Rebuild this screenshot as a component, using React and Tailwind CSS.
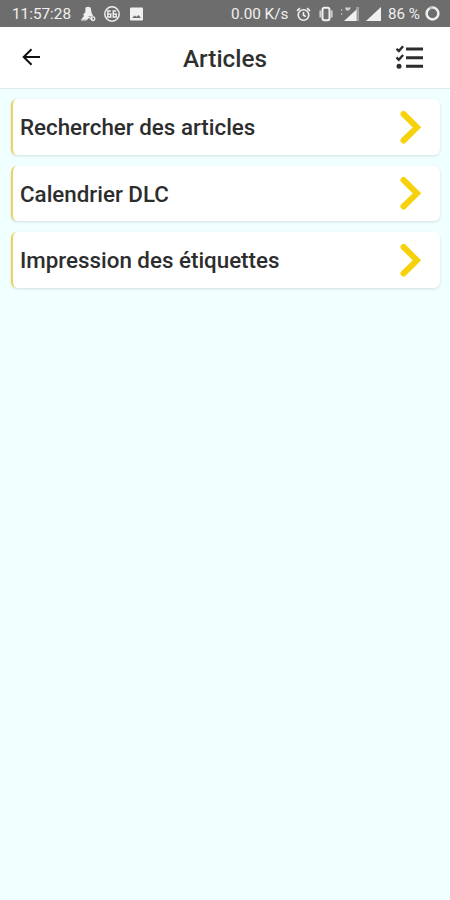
import React from 'react';

const items = ['Rechercher des articles', 'Calendrier DLC', 'Impression des étiquettes'];

function StatusBar() {
  return (
    <div className="flex h-[27px] items-center bg-[#6d6d6d] pl-3 pr-[10px] pt-[2px] text-[15.3px] text-[#f0f0f0]">
      <span className="w-[60px] whitespace-nowrap">11:57:28</span>
      <svg className="ml-2 mb-px h-4 w-4" viewBox="0 0 16 16" fill="currentColor">
        <path d="M5.5 1.5 8 .7l2.6.8 1 5.3 1.6 3.4-2.4.6-1.6-1-2.6 3.7H1.2l3-3.8L3 8.7l2.3-2.4z" />
        <path d="M1 14h5l3-3 2 2h2" fill="none" stroke="currentColor" strokeWidth="1.2" />
        <circle cx="13" cy="12.7" r="1.8" fill="none" stroke="currentColor" strokeWidth="1.3" />
      </svg>
      <svg className="ml-2 mb-px h-4 w-4" viewBox="0 0 16 16" fill="none" stroke="currentColor">
        <circle cx="8" cy="8" r="7.2" strokeWidth="1.5" />
        <path d="M6.8 5h-3v6h3V8h-3M12.2 5h-3v6h3V8h-3" strokeWidth="1.4" />
      </svg>
      <svg className="ml-2 mb-px h-4 w-4" viewBox="0 0 16 16">
        <rect x="2" y="1.5" width="13" height="13" rx="1" fill="currentColor" />
        <path d="M4 12l2.5-2.6 2 1.4 2-1.8L13 12z" fill="#6d6d6d" />
      </svg>
      <span className="ml-auto w-[57px] whitespace-nowrap">0.00 K/s</span>
      <svg className="ml-2 mb-px h-[15px] w-[15px]" viewBox="0 0 15 15" fill="none" stroke="currentColor" strokeWidth="1.6">
        <circle cx="7.5" cy="8" r="5.3" />
        <path d="M1 3.8 4 1.2M11 1.2l3 2.6M7.5 5v3.2l2.2 1.3" />
      </svg>
      <svg className="ml-[7px] mb-px h-4 w-4" viewBox="0 0 16 16" fill="none" stroke="currentColor">
        <rect x="4.5" y="1.8" width="7" height="12.4" rx="2" strokeWidth="2" />
        <path d="M2.3 4.5v7M13.7 4.5v7" strokeWidth="1.8" opacity=".75" />
      </svg>
      <svg className="ml-[7px] mb-px h-4 w-[18px]" viewBox="0 0 18 16" fill="currentColor">
        <path d="M15 1h3v14h-3z" fill="#a0a0a0" />
        <path d="M3 15 15.5 3.5V15z" />
        <path d="M4 1.5h6L8 4.5H5z" opacity=".75" />
        <path d="M0 3h1.2v2H0zM0 7h1.2v2H0z" opacity=".5" />
      </svg>
      <svg className="ml-[7px] mb-px h-4 w-[15px]" viewBox="0 0 15 16" fill="currentColor">
        <path d="M0 15 15 1v14z" />
      </svg>
      <span className="ml-[7px] w-[32px] whitespace-nowrap text-[15.2px]">86 %</span>
      <svg className="ml-[5px] mb-[2px] h-[15px] w-[15px]" viewBox="0 0 15 15" fill="none" stroke="currentColor">
        <circle cx="7.5" cy="7.5" r="5.9" strokeWidth="2.5" />
        <path d="M4.6 2.4A5.9 5.9 0 0 1 7.5 1.6" stroke="#c0c0c0" strokeWidth="2.5" />
      </svg>
    </div>
  );
}

function Header() {
  return (
    <header className="flex h-[62px] items-center justify-between border-b border-[#dfe9e9] bg-white pl-[22px] pr-[26px]">
      <svg className="mb-px h-[18px] w-[30px]" viewBox="0 0 30 18" fill="none" stroke="#111" strokeWidth="2">
        <path d="M18 9H2M9.5 1.2 1.7 9l7.8 7.8" />
      </svg>
      <h1 className="pl-[2px] pt-[3px] text-[24.3px] font-medium leading-none text-[#303030]">Articles</h1>
      <svg className="mb-px h-6 w-7" viewBox="0 0 28 24" fill="none" stroke="#2d2d2f">
        <path d="M.4 3.8 2.8 6 7.1 1.2M.4 12.5l2.4 2.2L7.1 10" strokeWidth="2.4" />
        <path d="M10 4h17M10 12.7h17M10 21.3h17" strokeWidth="3" />
        <circle cx="3" cy="21.3" r="2.5" fill="#2d2d2f" stroke="none" />
      </svg>
    </header>
  );
}

export default function App() {
  return (
    <div className="flex h-screen flex-col bg-[#f0ffff] font-[Roboto,sans-serif]">
      <StatusBar />
      <Header />
      <main className="flex flex-col gap-[11px] pl-[11px] pr-[10px] pt-[10px]">
        {items.map((label) => (
          <button
            key={label}
            className="flex h-[55.5px] items-center justify-between rounded-[6px] border-l-2 border-[#ecd45c] bg-white pl-[7px] pr-[19px] shadow-[0_1px_3px_rgba(0,0,0,0.13)]"
          >
            <span className="whitespace-nowrap pt-[3px] text-[22.35px] font-medium text-[#2d2d2d]">{label}</span>
            <svg className="h-[34px] w-[21px]" viewBox="0 0 21 34" fill="none" stroke="#f6d20c" strokeWidth="6" strokeLinecap="round">
              <path d="M3.5 4 17 17.3 3.5 30.5" />
            </svg>
          </button>
        ))}
      </main>
    </div>
  );
}
